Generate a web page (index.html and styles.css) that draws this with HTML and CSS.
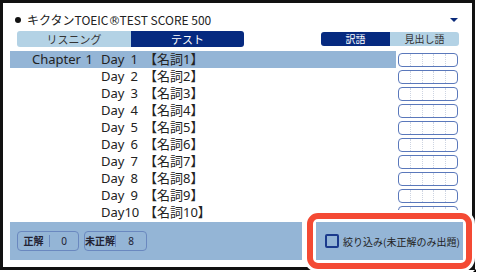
FILE: index.html
```html
<!DOCTYPE html>
<html lang="ja">
<head>
<meta charset="utf-8">
<title>キクタン</title>
<link rel="stylesheet" href="styles.css">
</head>
<body>
<div class="frame">
  <div class="title">
    <span class="dot"></span>
    <span class="ttl">キクタンTOEIC<span class="reg">®</span>TEST SCORE 500</span>
    <span class="caret"></span>
  </div>
  <div class="bar">
    <div class="tabs">
      <div class="tab">リスニング</div>
      <div class="tab on">テスト</div>
    </div>
    <div class="toggle">
      <div class="tg on">訳語</div>
      <div class="tg">見出し語</div>
    </div>
  </div>
  <div class="list">
    <div class="row sel"><div class="label"><span class="chap">Chapter</span><span class="chn">1</span><span class="day"><span>Day</span><span>1</span></span><span class="name">【名詞1】</span></div><div class="box"><i></i><i></i><i></i><i></i><i></i></div></div>
    <div class="row"><div class="label"><span class="chap"></span><span class="chn"></span><span class="day"><span>Day</span><span>2</span></span><span class="name">【名詞2】</span></div><div class="box"><i></i><i></i><i></i><i></i><i></i></div></div>
    <div class="row"><div class="label"><span class="chap"></span><span class="chn"></span><span class="day"><span>Day</span><span>3</span></span><span class="name">【名詞3】</span></div><div class="box"><i></i><i></i><i></i><i></i><i></i></div></div>
    <div class="row"><div class="label"><span class="chap"></span><span class="chn"></span><span class="day"><span>Day</span><span>4</span></span><span class="name">【名詞4】</span></div><div class="box"><i></i><i></i><i></i><i></i><i></i></div></div>
    <div class="row"><div class="label"><span class="chap"></span><span class="chn"></span><span class="day"><span>Day</span><span>5</span></span><span class="name">【名詞5】</span></div><div class="box"><i></i><i></i><i></i><i></i><i></i></div></div>
    <div class="row"><div class="label"><span class="chap"></span><span class="chn"></span><span class="day"><span>Day</span><span>6</span></span><span class="name">【名詞6】</span></div><div class="box"><i></i><i></i><i></i><i></i><i></i></div></div>
    <div class="row"><div class="label"><span class="chap"></span><span class="chn"></span><span class="day"><span>Day</span><span>7</span></span><span class="name">【名詞7】</span></div><div class="box"><i></i><i></i><i></i><i></i><i></i></div></div>
    <div class="row"><div class="label"><span class="chap"></span><span class="chn"></span><span class="day"><span>Day</span><span>8</span></span><span class="name">【名詞8】</span></div><div class="box"><i></i><i></i><i></i><i></i><i></i></div></div>
    <div class="row"><div class="label"><span class="chap"></span><span class="chn"></span><span class="day"><span>Day</span><span>9</span></span><span class="name">【名詞9】</span></div><div class="box"><i></i><i></i><i></i><i></i><i></i></div></div>
    <div class="row"><div class="label"><span class="chap"></span><span class="chn"></span><span class="day"><span>Day</span><span>10</span></span><span class="name">【名詞10】</span></div><div class="box"><i></i><i></i><i></i><i></i><i></i></div></div>
  </div>
  <div class="foot">
    <div class="fbar">
      <div class="pill p1"><span class="pl">正解</span><span class="pv">0</span></div>
      <div class="pill p2"><span class="pl">未正解</span><span class="pv">8</span></div>
    </div>
    <div class="hl">
      <div class="filter"><span class="cb"></span><span class="ft">絞り込み(未正解のみ出題)</span></div>
    </div>
  </div>
  <span class="grip"></span>
</div>
</body>
</html>
```
FILE: styles.css
```css
* { box-sizing: border-box; margin: 0; padding: 0; }
html, body { width: 477px; height: 273px; overflow: hidden; background: #fff; }
body { font-family: "Noto Sans", "Noto Sans CJK JP", sans-serif; color: #222; }

.frame {
  position: relative;
  width: 475px;
  height: 270px;
  border: 3px solid #111;
  background: #fff;
  display: flex;
  flex-direction: column;
}
.frame > * { flex-shrink: 0; }

.title {
  margin-top: 9px;
  height: 16px;
  display: flex;
  align-items: center;
  padding-left: 12px;
  padding-right: 14px;
}
.dot { width: 6px; height: 6px; border-radius: 50%; background: #111; margin-right: 6px; }
.ttl { font-family: "Noto Sans CJK JP", sans-serif; font-size: 12px; line-height: 16px; color: #222; }
.reg { font-family: "DejaVu Sans", sans-serif; font-size: 12px; letter-spacing: -1px; }
.caret {
  margin-left: auto;
  width: 0; height: 0;
  border-left: 4px solid transparent;
  border-right: 4px solid transparent;
  border-top: 4px solid #0a2a7a;
}

.bar {
  margin-top: 3px;
  height: 16px;
  display: flex;
  align-items: center;
  padding-left: 14px;
  padding-right: 13px;
}
.tabs { display: flex; height: 16px; }
.tab {
  width: 114px;
  height: 16px;
  line-height: 16px;
  text-align: center;
  font-family: "Noto Sans CJK JP", sans-serif;
  font-size: 11px;
  background: #b3d2e5;
  color: #333;
  border-radius: 3px 0 0 3px;
}
.tab.on { width: 113px; background: #062a80; color: #fff; border-radius: 0 3px 3px 0; }
.toggle { margin-left: auto; display: flex; height: 14px; }
.tg {
  width: 69px;
  height: 14px;
  line-height: 14px;
  text-align: center;
  font-family: "Noto Sans CJK JP", sans-serif;
  font-size: 10px;
  background: #b3d2e5;
  color: #333;
  border-radius: 0 3px 3px 0;
}
.tg.on { background: #062a80; color: #fff; border-radius: 3px 0 0 3px; }

.list { margin-top: 4px; padding-left: 7px; }
.row { display: flex; height: 17px; align-items: center; }
.label {
  width: 386px;
  height: 17px;
  display: flex;
  align-items: center;
  font-size: 13px;
  line-height: 17px;
  color: #222;
}
.row.sel .label { background: #94b5d6; }
.chap { width: 71px; padding-left: 22px; }
.chn { width: 12px; text-align: right; }
.day { margin-left: 8px; width: 37px; display: flex; justify-content: space-between; }
.name { margin-left: 6px; }
.box {
  margin-left: 2px;
  width: 60px;
  height: 14px;
  border: 1px solid #5a78bb;
  border-radius: 4px;
  background: #fff;
  display: flex;
}
.box i { flex: 1; border-left: 1px dotted #cdd4e2; }
.box i:first-child { border-left: none; }

.foot { display: flex; align-items: flex-start; margin-top: -8px; }
.fbar {
  margin-left: 7px;
  margin-top: 9px;
  width: 292px;
  height: 38px;
  background: #94b5d6;
  display: flex;
  align-items: center;
  padding-left: 7px;
  gap: 5px;
}
.pill {
  height: 20px;
  border: 1px solid #6a88bf;
  border-radius: 4px;
  display: flex;
  align-items: center;
  font-size: 10px;
  color: #223;
}
.p1 { width: 62px; }
.p1 .pl { width: 32px; }
.p2 { width: 63px; }
.p2 .pl { width: 31px; }
.pl {
  height: 12px;
  line-height: 12px;
  text-align: center;
  font-family: "Noto Sans CJK JP", sans-serif;
  font-weight: bold;
  border-right: 1px solid #6a88bf;
}
.pv { flex: 1; text-align: center; line-height: 12px; }

.hl {
  position: relative;
  z-index: 1;
  margin-left: 5px;
  width: 165px;
  height: 56px;
  border: 6px solid #f44a34;
  border-radius: 11px;
  padding: 3px;
  background: #fff;
  box-shadow: 0 0 0 3px #fff;
}
.filter {
  height: 38px;
  background: #94b5d6;
  display: flex;
  align-items: center;
  padding-left: 9px;
}
.cb {
  width: 14px;
  height: 14px;
  border: 2px solid #1b3a8c;
  border-radius: 2px;
  margin-right: 4px;
}
.ft { font-family: "Noto Sans CJK JP", sans-serif; font-size: 10px; color: #222; }

.grip {
  position: absolute;
  left: 470px;
  top: 266px;
  width: 0; height: 0;
  border-left: 3px solid transparent;
  border-bottom: 3px solid #000;
  z-index: 2;
}
```
